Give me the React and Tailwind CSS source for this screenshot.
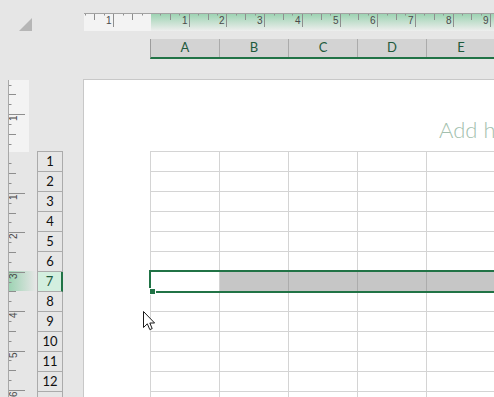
import React from "react";

const cols = ["A", "B", "C", "D", "E"];
const rows = Array.from({ length: 13 }, (_, i) => i + 1);

// top ruler: margin at 151px, one inch = 37.7px
const HorizontalRuler = () => {
  const margin = 67;
  const step = 37.7 / 4;
  const ticks = [];
  for (let k = -7; k <= 36; k++) {
    if (k === 0) continue;
    const kind = k % 4 === 0 ? "long" : k % 2 === 0 ? "mid" : "short";
    ticks.push({ x: Math.round(margin + k * step) + 0.5, kind, n: Math.abs(k / 4) });
  }
  return (
    <svg width="410" height="17" className="absolute left-0 top-0 block">
      {ticks.map((t, i) => (
        <line
          key={i}
          x1={t.x}
          x2={t.x}
          y1={0}
          y2={t.kind === "long" ? 13 : t.kind === "mid" ? 6 : 1.5}
          stroke="#8e8e8e"
        />
      ))}
      {ticks
        .filter((t) => t.kind === "long")
        .map((t, i) => (
          <text
            key={i}
            x={t.x - 2}
            y={9.5}
            textAnchor="end"
            fontSize="10"
            fontFamily="Liberation Sans, sans-serif"
            fill="#4a4a4a"
          >
            {t.n}
          </text>
        ))}
    </svg>
  );
};

// left ruler: margin at 153.5px, one inch = 39.4px
const VerticalRuler = () => {
  const margin = 73.5;
  const step = 39.4 / 4;
  const ticks = [];
  for (let k = -7; k <= 24; k++) {
    if (k === 0) continue;
    const kind = k % 4 === 0 ? "long" : k % 2 === 0 ? "mid" : "short";
    ticks.push({ y: Math.round(margin + k * step) + 0.5, kind, n: Math.abs(k / 4) });
  }
  return (
    <svg width="28" height="317" className="absolute left-0 top-0 block">
      {ticks.map((t, i) => (
        <line
          key={i}
          x1={0}
          x2={t.kind === "long" ? 16 : t.kind === "mid" ? 7 : 2.5}
          y1={t.y}
          y2={t.y}
          stroke="#8e8e8e"
        />
      ))}
      {ticks
        .filter((t) => t.kind === "long")
        .map((t, i) => (
          <text
            key={i}
            transform={`translate(7.5 ${t.y + 6.5}) rotate(-90)`}
            fontSize="10"
            fontFamily="Liberation Sans, sans-serif"
            fill="#4a4a4a"
          >
            {t.n}
          </text>
        ))}
    </svg>
  );
};

export default function App() {
  return (
    <div className="relative h-[397px] w-[494px] overflow-hidden bg-[#e6e6e6] font-['Lato',sans-serif] text-[#222]">
      {/* corner + top ruler */}
      <div className="flex h-[39px]">
        <div className="w-[84px] shrink-0 pl-[19px] pt-[18px]">
          <svg width="13" height="13" className="block">
            <polygon points="13,0 13,13 0,13" fill="#b6b6b6" />
          </svg>
        </div>
        <div className="relative mt-[13px] flex h-[18px] flex-1 border-t border-[#a2a2a2]">
          <div className="w-[67px] bg-[#f3f3f3]" />
          <div className="flex-1 bg-gradient-to-b from-[#9dd3b3] to-[#eeeeee]" />
          <HorizontalRuler />
        </div>
      </div>

      {/* column headers */}
      <div className="flex h-[20px]">
        <div className="w-[150px] shrink-0" />
        <div className="flex flex-1 overflow-hidden border-b-2 border-l border-b-[#217346] border-l-[#9c9c9c] bg-[#d3d3d3]">
          {cols.map((c) => (
            <div
              key={c}
              className="flex w-[69px] shrink-0 items-center justify-center border-r border-[#ababab] text-[13px] text-[#1e5a3c]"
            >
              {c}
            </div>
          ))}
        </div>
      </div>

      <div className="h-[20px]" />

      {/* body */}
      <div className="flex h-[318px]">
        <div className="relative ml-[8px] mt-px w-[29px] shrink-0 border-l border-[#a8a8a8]">
          <div className="h-[72px] w-[20px] bg-[#f3f3f3]" />
          <div className="absolute left-0 top-[191px] h-[20px] w-[27px] bg-gradient-to-r from-[#9dd3b3] to-transparent" />
          <VerticalRuler />
        </div>

        <div className="mt-[72px] w-[26px] shrink-0 border-t border-[#ababab]">
          {rows.map((r) =>
            r === 7 ? (
              <div
                key={r}
                className="flex h-[20px] items-center justify-center border-b border-l border-r-2 border-b-[#ababab] border-l-[#ababab] border-r-[#217346] bg-[#d3efdf] text-[13px] text-[#1e5a3c]"
              >
                {r}
              </div>
            ) : r > 12 ? (
              <div key={r} className="h-[20px] border-b border-l border-r border-[#ababab]" />
            ) : (
              <div
                key={r}
                className="flex h-[20px] items-center justify-center border-b border-l border-r border-[#ababab] text-[13px] text-[#111]"
              >
                {r}
              </div>
            )
          )}
        </div>

        <div className="ml-[20px] flex-1 overflow-hidden border-l border-t border-[#c8c8c8] bg-white">
          <div className="h-[71px] pl-[355px] pt-[39px]">
            <span className="whitespace-nowrap text-[22px] font-light leading-none text-[#a3bfae]">
              Add header
            </span>
          </div>

          <div className="relative ml-[66px] w-max border-l border-t border-[#d4d4d4]">
            {rows.map((r) => (
              <div key={r} className="flex">
                {cols.map((c, i) =>
                  r === 7 && i > 0 ? (
                    <div key={c} className="h-[20px] w-[69px] shrink-0 border-b border-r border-[#acacac] bg-[#c6c6c6]" />
                  ) : (
                    <div key={c} className="h-[20px] w-[69px] shrink-0 border-b border-r border-[#d4d4d4]" />
                  )
                )}
              </div>
            ))}
            {/* selected row outline */}
            <div className="absolute left-[-2px] top-[118px] h-[23px] w-[420px] border-2 border-r-0 border-[#217346]" />
            <div className="absolute left-[-2px] top-[136px] h-[7px] w-[7px] border border-white bg-[#217346]" />
          </div>
        </div>
      </div>

      {/* mouse pointer */}
      <svg width="13" height="20" viewBox="0 0 13 20" className="absolute left-[143px] top-[311px] block">
        <path d="M0.5 0.5 V16.5 L4.3 12.8 L6.8 18.6 L9.2 17.6 L6.8 12 H11.6 Z" fill="#fff" stroke="#1a1a1a" />
      </svg>
    </div>
  );
}
